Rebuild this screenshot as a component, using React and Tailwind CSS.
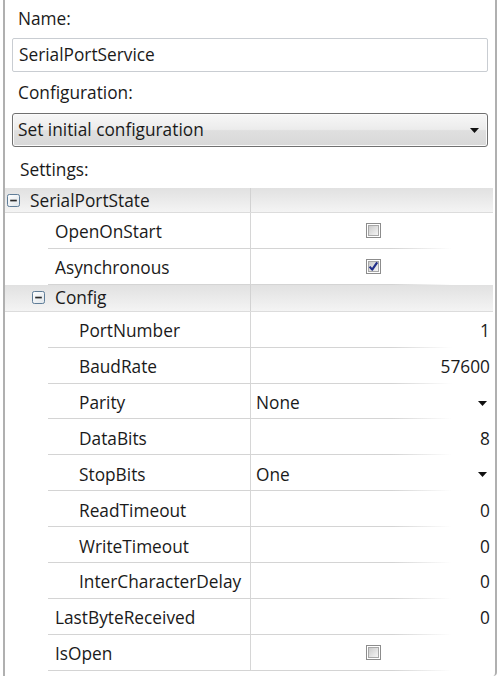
import React from "react";

const FONT = { fontFamily: '"Open Sans", "Noto Sans", sans-serif' };

function Minus() {
  return (
    <svg width="13" height="13" viewBox="0 0 13 13" className="shrink-0">
      <defs>
        <linearGradient id="mg" x1="0" y1="0" x2="1" y2="1">
          <stop offset="0" stopColor="#ffffff" />
          <stop offset="1" stopColor="#dfe5ea" />
        </linearGradient>
      </defs>
      <rect x="0.5" y="0.5" width="12" height="12" rx="1.8" fill="url(#mg)" stroke="#5f7d98" />
      <rect x="3.2" y="5.7" width="6.6" height="1.7" fill="#2b2b2b" />
    </svg>
  );
}

function Check({ checked }) {
  return (
    <svg width="15" height="15" viewBox="0 0 15 15">
      <defs>
        <linearGradient id="cg" x1="0" y1="0" x2="1" y2="1">
          <stop offset="0" stopColor="#c9c9c9" />
          <stop offset="1" stopColor="#f7f7f7" />
        </linearGradient>
      </defs>
      <rect x="0.5" y="0.5" width="14" height="14" fill="#fff" stroke="#8c8c8c" />
      <rect x="2.5" y="2.5" width="10" height="10" fill="url(#cg)" stroke="#a8a8a8" />
      {checked && (
        <path d="M3.6 7.6 L6.2 10.6 L11.2 3.4" fill="none" stroke="#23308a" strokeWidth="2.2" strokeLinejoin="round" />
      )}
    </svg>
  );
}

function Arrow() {
  return (
    <svg width="9" height="5" viewBox="0 0 9 5">
      <path d="M0 0 H9 L4.5 5 Z" fill="#111" />
    </svg>
  );
}

const rows = [
  { header: true, level: 0, label: "SerialPortState" },
  { level: 1, label: "OpenOnStart", kind: "check", v: false },
  { level: 1, label: "Asynchronous", kind: "check", v: true },
  { header: true, level: 1, label: "Config" },
  { level: 2, label: "PortNumber", kind: "num", v: "1" },
  { level: 2, label: "BaudRate", kind: "num", v: "57600" },
  { level: 2, label: "Parity", kind: "combo", v: "None" },
  { level: 2, label: "DataBits", kind: "num", v: "8" },
  { level: 2, label: "StopBits", kind: "combo", v: "One" },
  { level: 2, label: "ReadTimeout", kind: "num", v: "0" },
  { level: 2, label: "WriteTimeout", kind: "num", v: "0" },
  { level: 2, label: "InterCharacterDelay", kind: "num", v: "0" },
  { level: 1, label: "LastByteReceived", kind: "num", v: "0" },
  { level: 1, label: "IsOpen", kind: "check", v: false },
];

function HeaderRow({ row }) {
  return (
    <div
      className={
        "flex bg-gradient-to-b from-[#e1e1e1] to-[#f4f4f4] border-b border-[#dcdcdc] " +
        (row.level === 0 ? "h-[25px]" : "h-[27px]")
      }
    >
      <div
        className={
          "w-[246px] shrink-0 flex items-center gap-[10px] border-r border-[#d2d2d2] " +
          (row.level === 0 ? "pl-[2px]" : "pl-[27px]")
        }
      >
        <Minus />
        <span className="pt-[1px]">{row.label}</span>
      </div>
      <div className="flex-1" />
    </div>
  );
}

function DataRow({ row }) {
  const pad = row.level === 1 ? "pl-[50px]" : "pl-[74px]";
  let value = null;
  if (row.kind === "check") {
    value = (
      <div className="flex-1 flex items-center justify-center pl-[3px] pt-[1px]">
        <Check checked={row.v} />
      </div>
    );
  } else if (row.kind === "num") {
    value = <div className="flex-1 flex items-center justify-end pr-[3px] pt-[4px]">{row.v}</div>;
  } else {
    value = (
      <div className="flex-1 flex items-center justify-between pl-[5px] pr-[6px] pt-[4px]">
        <span>{row.v}</span>
        <Arrow />
      </div>
    );
  }
  return (
    <div className="flex flex-col">
      <div className="flex h-[34.9px]">
        <div className={"w-[246px] shrink-0 flex items-center pt-[4px] border-r border-[#d6d6d6] " + pad}>
          {row.label}
        </div>
        {value}
      </div>
      <div className="flex h-[1px]">
        <div className="w-[43px] shrink-0" />
        <div className="w-[203px] shrink-0 bg-[#d4d4d4]" />
        <div className="w-[1px] shrink-0 bg-[#d6d6d6]" />
        <div className="w-[200px] shrink-0 bg-gradient-to-r from-[#d4d4d4] from-70% to-transparent" />
      </div>
    </div>
  );
}

export default function App() {
  return (
    <div className="w-[500px] h-[680px] bg-white overflow-hidden text-[17.3px] text-[#1a1a1a]" style={FONT}>
      <div className="ml-[3px] w-[494px] h-[676px] border-l-2 border-r-2 border-b-0 border-[#b0b0b0] rounded-br-[4px] flex flex-col">
        <div className="h-[38px] flex items-center pl-[13px] pb-[1px]">Name:</div>
        <div className="mx-[7px] h-[34px] border border-[#c9cdd2] rounded-[2px] flex items-center pl-[6px]">
          SerialPortService
        </div>
        <div className="h-[41px] flex items-center pl-[13px]">Configuration:</div>
        <div className="mx-[7px] h-[34px] border border-[#707070] rounded-[3px] bg-[linear-gradient(to_bottom,#f7f7f7_0%,#ececec_48%,#dfdfdf_52%,#d8d8d8_100%)] flex items-center justify-between pl-[5px] pr-[8px] shadow-[inset_0_0_0_1px_#fbfbfb]">
          <span>Set initial configuration</span>
          <Arrow />
        </div>
        <div className="h-[41px] flex items-center pl-[15px] pt-[4px]">Settings:</div>
        <div className="flex flex-col mr-[2px]">
          {rows.map((r, i) =>
            r.header ? <HeaderRow key={i} row={r} /> : <DataRow key={i} row={r} />
          )}
        </div>
      </div>
    </div>
  );
}
